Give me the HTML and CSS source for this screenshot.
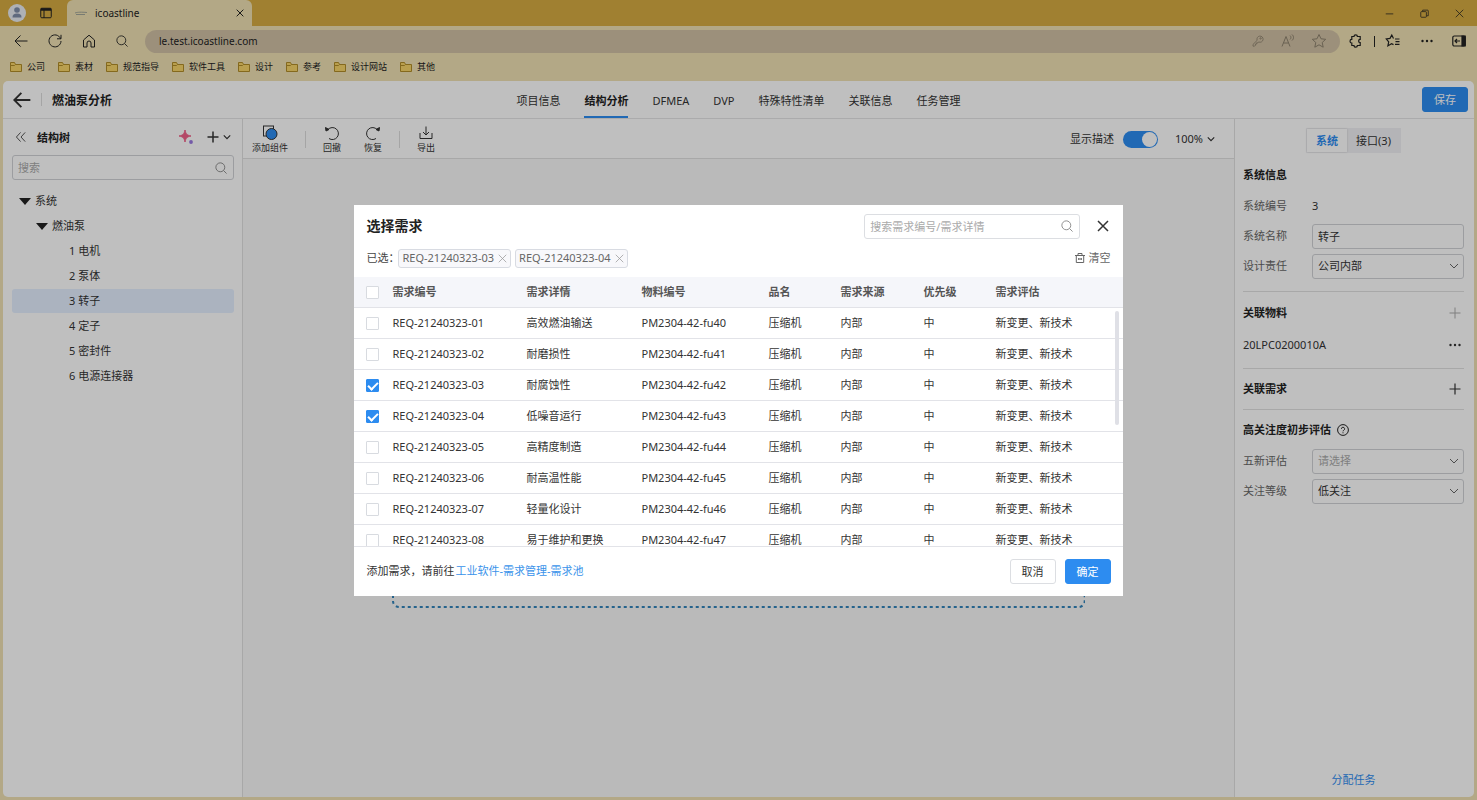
FILE: index.html
```
<!DOCTYPE html>
<html lang="zh-CN">

<head>
    <meta charset="UTF-8">
    <meta name="viewport" content="width=device-width, initial-scale=1.0">
    <title>icoastline</title>
    <link rel="stylesheet" href="styles.css">
</head>

<body>
    <!-- Icons -->
    <svg class="sprite" aria-hidden="true">
        <symbol id="i-folder" viewBox="0 0 12 12"><path d="M.5 10.500v-9h4l1 2h6v7z" fill="#f7d468" stroke="#b08d28"/><path d="M.5 4.500h4l1-1" fill="none" stroke="#b08d28"/></symbol>
        <symbol id="i-search" viewBox="0 0 14 14"><circle cx="6.200" cy="6.200" r="5.200"/><path d="M10 10l3.500 3.500"/></symbol>
        <symbol id="i-close" viewBox="0 0 12 12"><path d="M1 1l10 10M11 1L1 11"/></symbol>
        <symbol id="i-plus" viewBox="0 0 12 12"><path d="M6 .5v11M.5 6h11"/></symbol>
        <symbol id="i-down" viewBox="0 0 10 10"><path d="M1 3l4 4 4-4"/></symbol>
        <symbol id="i-back" viewBox="0 0 14 14"><path d="M13.500 7H1M6.500 1.500L1 7l5.500 5.500"/></symbol>
        <symbol id="i-dots" viewBox="0 0 12 12"><g fill="currentColor" stroke="none"><circle cx="1.500" cy="6" r="1.200"/><circle cx="6" cy="6" r="1.200"/><circle cx="10.500" cy="6" r="1.200"/></g></symbol>
        <symbol id="i-undo" viewBox="0 0 16 16"><path d="M2.500 4.500h1.500A6 6 0 1 1 5 13.500"/><path d="M1.500 2.500l.5 3.500 3-1.500z" fill="currentColor"/></symbol>
    </svg>

    <!-- Browser -->
    <div class="titlebar">
        <svg class="avatar" viewBox="0 0 18 18"><circle cx="9" cy="9" r="9" fill="#e9ecf2"/><circle cx="9" cy="6" r="2.800" fill="#7f8ea8"/><path d="M4.500 13.500c0-3 1.500-4 4.500-4s4.500 1 4.500 4z" fill="#7f8ea8"/></svg>
        <svg class="icon icon-12 workspace" viewBox="0 0 12 12"><rect x=".75" y="1.250" width="10.500" height="9.500" rx="1"/><path d="M.75 2.500h10.500" stroke-width="2.500"/><path d="M4 3v8"/></svg>
        <div class="tab">
            <svg class="icon icon-12 favicon" viewBox="0 0 12 12"><path d="M0 6c3-1 6-1 12-.500M1 7.500h9" stroke-width=".8"/></svg>
            <span class="tab-title">icoastline</span>
            <button class="plain" aria-label="关闭标签页"><svg class="icon icon-8 bold"><use href="#i-close"/></svg></button>
        </div>
        <div class="window-buttons">
            <button class="plain" aria-label="最小化"><svg class="icon icon-9" viewBox="0 0 12 12"><path d="M1 6.500h10"/></svg></button>
            <button class="plain" aria-label="还原"><svg class="icon icon-9" viewBox="0 0 12 12"><rect x="1" y="3.500" width="7.500" height="7.500" rx="1"/><path d="M3.500 3V1.500H10a1 1 0 0 1 1 1V9H9"/></svg></button>
            <button class="plain" aria-label="关闭"><svg class="icon icon-9"><use href="#i-close"/></svg></button>
        </div>
    </div>

    <div class="navbar">
        <div class="nav-left">
            <button class="plain" aria-label="后退"><svg class="icon icon-14"><use href="#i-back"/></svg></button>
            <button class="plain" aria-label="刷新"><svg class="icon icon-14" viewBox="0 0 14 14"><path d="M12.500 4.500A6 6 0 1 0 13 7M13 .8v4H9"/></svg></button>
            <button class="plain" aria-label="主页"><svg class="icon icon-14" viewBox="0 0 14 14"><path d="M1.500 6L7 1.200 12.500 6v7H9V9a2 2 0 0 0-4 0v4H1.500z"/></svg></button>
            <button class="plain" aria-label="查找"><svg class="icon icon-12"><use href="#i-search"/></svg></button>
        </div>
        <div class="address">
            <input class="url" type="text" aria-label="地址" value="le.test.icoastline.com">
            <svg class="icon icon-12" viewBox="0 0 14 14"><path d="M6 6.200a3.600 3.600 0 1 1 2 2L6.800 9H5.500v1.500H4V12l-1 1H1.200v-2z"/><circle cx="10" cy="4" r=".8"/></svg>
            <svg class="icon icon-14" viewBox="0 0 14 14"><path d="M1 12.500L5 2.500l4 10M2.500 9h5M9 1.500c1.200 1 1.200 3 0 4M11 .5c2 1.800 2 4.200 0 6"/></svg>
            <svg class="icon icon-14" viewBox="0 0 14 14"><path d="M7 .5l2 4.300 4.700.5-3.500 3.200 1 4.700L7 10.800l-4.200 2.400 1-4.700L.3 5.300 5 4.800z"/></svg>
        </div>
        <button class="plain" aria-label="扩展"><svg class="icon icon-14 medium" viewBox="0 0 14 14"><path d="M2.800 2.500H5a1.700 1.700 0 0 1 3.400 0h2.800V5.300a1.300 1.300 0 0 0 0 3.200V11.500H8.400a1.700 1.700 0 0 1-3.400 0H2.800V9a1.700 1.700 0 0 1 0-3.600z"/></svg></button>
        <span class="nav-divider"></span>
        <button class="plain" aria-label="收藏夹"><svg class="icon icon-14 medium" viewBox="0 0 14 14"><path d="M9 5h4.500M9.500 7.700h4M9 10.400h4.500M7.500 10.600L5.500 9.700l-3.600 2.200.8-4.100L.3 4.900l3.700-.5L5.800 1l1.700 3.400"/></svg></button>
        <button class="plain nav-more" aria-label="更多"><svg class="icon icon-12"><use href="#i-dots"/></svg></button>
        <button class="plain" aria-label="侧栏"><svg class="icon icon-14 medium" viewBox="0 0 14 14"><rect x=".8" y="2" width="12.400" height="10" rx="1.500"/><path d="M10 2h3.200v10H10z" fill="currentColor"/><path d="M8 7H3M5 5L3 7l2 2"/></svg></button>
    </div>

    <div class="bookmarks">
        <a href="#"><svg><use href="#i-folder"/></svg>公司</a>
        <a href="#"><svg><use href="#i-folder"/></svg>素材</a>
        <a href="#"><svg><use href="#i-folder"/></svg>规范指导</a>
        <a href="#"><svg><use href="#i-folder"/></svg>软件工具</a>
        <a href="#"><svg><use href="#i-folder"/></svg>设计</a>
        <a href="#"><svg><use href="#i-folder"/></svg>参考</a>
        <a href="#"><svg><use href="#i-folder"/></svg>设计网站</a>
        <a href="#"><svg><use href="#i-folder"/></svg>其他</a>
    </div>

    <!-- App -->
    <div class="app">
        <header class="app-header">
            <div class="app-title">
                <button class="plain" aria-label="返回"><svg class="icon icon-18 bold" viewBox="0 0 14 14"><use href="#i-back"/></svg></button>
                <span class="title-divider"></span>
                <h1>燃油泵分析</h1>
            </div>
            <nav class="tabs">
                <a href="#">项目信息</a>
                <a href="#" class="active">结构分析</a>
                <a href="#">DFMEA</a>
                <a href="#">DVP</a>
                <a href="#">特殊特性清单</a>
                <a href="#">关联信息</a>
                <a href="#">任务管理</a>
            </nav>
            <button class="btn btn-primary save">保存</button>
        </header>

        <div class="workspace-body">
            <aside class="sidebar">
                <div class="sidebar-head">
                    <button class="plain" aria-label="收起"><svg class="icon icon-10" viewBox="0 0 12 12"><path d="M5.500 .5L.5 6l5 5.500M11 .5L6 6l5 5.500"/></svg></button>
                    <h2>结构树</h2>
                    <svg class="icon-14 sparkle" viewBox="0 0 14 14"><path d="M6 0c.8 4 2 5.200 6 6-4 .8-5.200 2-6 6-.8-4-2-5.200-6-6 4-.8 5.200-2 6-6z" fill="#f06088" stroke="#f06088"/><circle cx="12" cy="12" r="1.900" fill="#9a78e0"/></svg>
                    <button class="plain add" aria-label="添加"><svg class="icon icon-12 bold"><use href="#i-plus"/></svg><svg class="icon icon-8 bold"><use href="#i-down"/></svg></button>
                </div>
                <div class="search">
                    <input type="text" placeholder="搜索" aria-label="搜索">
                    <svg class="icon icon-12"><use href="#i-search" /></svg>
                </div>
                <ul class="tree">
                    <li class="level-1"><span class="arrow"></span>系统</li>
                    <li class="level-2"><span class="arrow"></span>燃油泵</li>
                    <li class="level-3">1 电机</li>
                    <li class="level-3">2 泵体</li>
                    <li class="level-3 selected">3 转子</li>
                    <li class="level-3">4 定子</li>
                    <li class="level-3">5 密封件</li>
                    <li class="level-3">6 电源连接器</li>
                </ul>
            </aside>

            <main class="editor">
                <div class="toolbar">
                    <button class="tool"><svg class="icon icon-16" viewBox="0 0 16 16"><rect x="1.500" y="1" width="10" height="10"/><circle cx="9.500" cy="9" r="5.500" fill="#2d8cf0"/></svg>添加组件</button>
                    <span class="tool-divider"></span>
                    <div class="tool-group">
                        <button class="tool"><svg class="icon icon-16"><use href="#i-undo"/></svg>回撤</button>
                        <button class="tool"><svg class="icon icon-16 flip"><use href="#i-undo"/></svg>恢复</button>
                    </div>
                    <span class="tool-divider"></span>
                    <button class="tool"><svg class="icon icon-16" viewBox="0 0 16 16"><path d="M2 8v5.500h12V8M8 1.500v8.500M5 7l3 3 3-3"/></svg>导出</button>
                    <label class="switch-label">显示描述<input class="switch" type="checkbox" checked></label>
                    <button class="plain zoom">100%<svg class="icon icon-8 bold"><use href="#i-down"/></svg></button>
                </div>
                <div class="canvas">
                    <svg class="drop-area"><rect x="1" y="1" rx="6"/></svg>
                </div>
            </main>

            <aside class="panel">
                <div class="segmented">
                    <button class="active">系统</button>
                    <button>接口(3)</button>
                </div>
                <section>
                    <h3>系统信息</h3>
                    <div class="field"><span>系统编号</span><b>3</b></div>
                    <div class="field"><label for="name">系统名称</label><input id="name" type="text" value="转子"></div>
                    <div class="field"><label for="duty">设计责任</label><div class="select"><select id="duty"><option>公司内部</option></select><svg class="icon icon-10"><use href="#i-down"/></svg></div></div>
                </section>
                <section class="materials">
                    <div class="section-head"><h3>关联物料</h3><button class="plain muted" aria-label="添加物料"><svg class="icon icon-12"><use href="#i-plus"/></svg></button></div>
                    <div class="section-head"><span>20LPC0200010A</span><button class="plain" aria-label="更多操作"><svg class="icon icon-12"><use href="#i-dots"/></svg></button></div>
                </section>
                <section>
                    <div class="section-head"><h3>关联需求</h3><button class="plain" aria-label="添加需求"><svg class="icon icon-12 medium"><use href="#i-plus"/></svg></button></div>
                </section>
                <section class="rating">
                    <h3>高关注度初步评估<svg class="icon icon-12" viewBox="0 0 12 12"><circle cx="6" cy="6" r="5.400"/><path d="M4.400 4.800a1.600 1.600 0 1 1 2.300 1.500c-.5.2-.7.5-.7 1M6 8.300v1"/></svg></h3>
                    <div class="field"><label for="five">五新评估</label><div class="select empty"><select id="five"><option>请选择</option></select><svg class="icon icon-10"><use href="#i-down"/></svg></div></div>
                    <div class="field"><label for="level">关注等级</label><div class="select"><select id="level"><option>低关注</option></select><svg class="icon icon-10"><use href="#i-down"/></svg></div></div>
                </section>
                <a class="assign" href="#">分配任务</a>
            </aside>
        </div>
    </div>

    <!-- Dialog -->
    <div class="backdrop">
        <div class="dialog" role="dialog" aria-labelledby="dialog-title">
            <div class="dialog-head">
                <h2 id="dialog-title">选择需求</h2>
                <div class="search">
                    <input type="text" placeholder="搜索需求编号/需求详情" aria-label="搜索需求">
                    <svg class="icon icon-12"><use href="#i-search"/></svg>
                </div>
                <button class="plain" aria-label="关闭对话框"><svg class="icon icon-12 bold"><use href="#i-close"/></svg></button>
            </div>
            <div class="picked">
                <span>已选：</span>
                <span class="chip">REQ-21240323-03<button class="plain" aria-label="移除"><svg class="icon icon-9"><use href="#i-close"/></svg></button></span>
                <span class="chip">REQ-21240323-04<button class="plain" aria-label="移除"><svg class="icon icon-9"><use href="#i-close"/></svg></button></span>
                <button class="plain clear"><svg class="icon icon-10" viewBox="0 0 10 10"><path d="M0 2.500h10M3 2.500v-2h4v2M1.300 2.500v7h7.400v-7M3.700 5v2M6.300 5v2M3.700 6h2.600"/></svg>清空</button>
            </div>
            <div class="table-wrap">
                <table>
                    <colgroup><col class="c-check"><col class="c-no"><col class="c-detail"><col class="c-part"><col class="c-name"><col class="c-source"><col class="c-name"><col></colgroup>
                    <thead>
                        <tr><th><input type="checkbox" aria-label="全选"></th><th>需求编号</th><th>需求详情</th><th>物料编号</th><th>品名</th><th>需求来源</th><th>优先级</th><th>需求评估</th></tr>
                    </thead>
                    <tbody>
                        <tr><td><input type="checkbox" aria-label="选择 01"></td><td>REQ-21240323-01</td><td>高效燃油输送</td><td>PM2304-42-fu40</td><td>压缩机</td><td>内部</td><td>中</td><td>新变更、新技术</td></tr>
                        <tr><td><input type="checkbox" aria-label="选择 02"></td><td>REQ-21240323-02</td><td>耐磨损性</td><td>PM2304-42-fu41</td><td>压缩机</td><td>内部</td><td>中</td><td>新变更、新技术</td></tr>
                        <tr><td><input type="checkbox" aria-label="选择 03" checked></td><td>REQ-21240323-03</td><td>耐腐蚀性</td><td>PM2304-42-fu42</td><td>压缩机</td><td>内部</td><td>中</td><td>新变更、新技术</td></tr>
                        <tr><td><input type="checkbox" aria-label="选择 04" checked></td><td>REQ-21240323-04</td><td>低噪音运行</td><td>PM2304-42-fu43</td><td>压缩机</td><td>内部</td><td>中</td><td>新变更、新技术</td></tr>
                        <tr><td><input type="checkbox" aria-label="选择 05"></td><td>REQ-21240323-05</td><td>高精度制造</td><td>PM2304-42-fu44</td><td>压缩机</td><td>内部</td><td>中</td><td>新变更、新技术</td></tr>
                        <tr><td><input type="checkbox" aria-label="选择 06"></td><td>REQ-21240323-06</td><td>耐高温性能</td><td>PM2304-42-fu45</td><td>压缩机</td><td>内部</td><td>中</td><td>新变更、新技术</td></tr>
                        <tr><td><input type="checkbox" aria-label="选择 07"></td><td>REQ-21240323-07</td><td>轻量化设计</td><td>PM2304-42-fu46</td><td>压缩机</td><td>内部</td><td>中</td><td>新变更、新技术</td></tr>
                        <tr><td><input type="checkbox" aria-label="选择 08"></td><td>REQ-21240323-08</td><td>易于维护和更换</td><td>PM2304-42-fu47</td><td>压缩机</td><td>内部</td><td>中</td><td>新变更、新技术</td></tr>
                    </tbody>
                </table>
                <span class="scroll-thumb"></span>
            </div>
            <div class="dialog-foot">
                <p>添加需求，请前往<a href="#">工业软件-需求管理-需求池</a></p>
                <button class="btn">取消</button>
                <button class="btn btn-primary">确定</button>
            </div>
        </div>
    </div>
</body>

</html>
```
FILE: styles.css
```
* {
    box-sizing: border-box;
}

body {
    display: flex;
    flex-direction: column;
    height: 100vh;
    margin: 0;
    background-color: #efe1b3;
    font-family: "Noto Sans", "Noto Sans CJK SC", sans-serif;
    font-size: 11px;
    line-height: 16px;
    color: #333;
    overflow: hidden;
}

h1, h2, h3, p, ul {
    margin: 0;
    padding: 0;
}

h2, h3 {
    font-size: 11px;
    color: #222;
}

a {
    color: inherit;
    text-decoration: none;
}

button, input, select {
    font: inherit;
    color: inherit;
}

.sprite {
    position: absolute;
    width: 0;
    height: 0;
}

.plain {
    display: flex;
    align-items: center;
    padding: 0;
    border: 0;
    background: none;
}

/* Icons */
.icon {
    flex: none;
    display: block;
    fill: none;
    stroke: currentColor;
    stroke-width: 1;
    overflow: visible;
}

.medium { stroke-width: 1.2; }
.bold { stroke-width: 1.5; }
.icon-8 { width: 8px; height: 8px; }
.icon-9 { width: 9px; height: 9px; }
.icon-10 { width: 10px; height: 10px; }
.icon-12 { width: 12px; height: 12px; }
.icon-14 { width: 14px; height: 14px; }
.icon-16 { width: 16px; height: 16px; }
.icon-18 { width: 18px; height: 18px; }
.flip { transform: scaleX(-1); }

/* Browser */
.titlebar {
    flex: none;
    display: flex;
    align-items: center;
    height: 26px;
    padding-left: 8px;
    background-color: #d6ab42;
    color: #222;
}

.avatar {
    width: 18px;
    height: 18px;
}

.workspace {
    margin: 0 15px 0 14px;
}

.tab {
    display: flex;
    align-items: center;
    align-self: stretch;
    gap: 8px;
    width: 185px;
    padding: 0 8px;
    border-radius: 6px 6px 0 0;
    background-color: #efe1b3;
    font-size: 10px;
}

.tab-title {
    flex: 1;
}

.favicon {
    color: #8d9490;
}

.window-buttons {
    display: flex;
    gap: 26px;
    margin-left: auto;
    padding-right: 13px;
}

.navbar {
    flex: none;
    display: flex;
    align-items: center;
    height: 30px;
    padding: 0 11px 0 14px;
    color: #222;
}

.nav-left {
    display: flex;
    gap: 20px;
}

.address {
    flex: 1;
    display: flex;
    align-items: center;
    gap: 17px;
    height: 23px;
    margin: 0 9px 0 17px;
    padding: 0 14px;
    border-radius: 12px;
    background-color: #d1c1a5;
    color: #8d826e;
}

.url {
    flex: 1;
    padding: 0;
    border: 0;
    background: none;
    font-size: 10px;
    color: #222;
}

.nav-divider {
    width: 1px;
    height: 11px;
    margin: 0 11px;
    background-color: #222;
}

.nav-more {
    margin: 0 19px 0 21px;
}

.bookmarks {
    flex: none;
    display: flex;
    gap: 13px;
    height: 25px;
    padding: 0 10px 3px;
    font-size: 9px;
    line-height: 22px;
    color: #222;
}

.bookmarks a {
    display: flex;
    align-items: center;
    gap: 5px;
}

.bookmarks svg {
    width: 12px;
    height: 12px;
}

/* App */
.app {
    flex: 1;
    display: flex;
    flex-direction: column;
    min-height: 0;
    margin: 0 3px 3px;
    border-radius: 5px;
    background-color: #fff;
    overflow: hidden;
}

.app-header {
    display: grid;
    grid-template-columns: 1fr auto 1fr;
    align-items: center;
    height: 38px;
    padding: 0 6px;
    border-bottom: 1px solid #e4e4e6;
}

.app-title {
    display: flex;
    align-items: center;
    gap: 10px;
    padding-left: 4px;
}

.title-divider {
    width: 1px;
    height: 13px;
    background-color: #dcdcdc;
}

h1 {
    font-size: 12px;
    line-height: 18px;
    padding-top: 2px;
    color: #222;
}

.tabs {
    display: flex;
    gap: 24px;
    height: 37px;
    line-height: 40px;
}

.tabs .active {
    border-bottom: 2px solid #2d8cf0;
    font-weight: bold;
    color: #222;
}

.btn {
    height: 25px;
    width: 46px;
    padding: 1px 0 0;
    border: 1px solid #dcdee2;
    border-radius: 3px;
    background-color: #fff;
}

.btn-primary {
    border-color: #2d8cf0;
    background-color: #2d8cf0;
    color: #fff;
}

.save {
    justify-self: end;
}

.workspace-body {
    flex: 1;
    display: flex;
    min-height: 0;
}

/* Structure tree */
.sidebar {
    flex: none;
    width: 240px;
    padding: 6px 8px 6px 9px;
    border-right: 1px solid #e0e0e0;
}

.sidebar-head {
    display: flex;
    align-items: center;
    height: 24px;
    margin-bottom: 6px;
    padding: 0 3px 0 4px;
}

.sidebar-head h2 {
    flex: 1;
    margin-left: 11px;
    padding-top: 1px;
}

.add {
    gap: 4px;
    margin-left: 14px;
}

.search {
    display: flex;
    align-items: center;
    height: 25px;
    padding: 0 6px 0 5px;
    border: 1px solid #d0d2d6;
    border-radius: 3px;
    color: #808080;
}

.search input {
    flex: 1;
    min-width: 0;
    padding: 1px 0 0;
    border: 0;
    background: none;
}

.search input::placeholder {
    color: #aaa;
}

.tree {
    display: flex;
    flex-direction: column;
    gap: 1px;
    margin-top: 9px;
    list-style: none;
}

.tree li {
    display: flex;
    align-items: center;
    gap: 4px;
    height: 24px;
    border-radius: 3px;
}

.tree .level-1 { padding-left: 7px; }
.tree .level-2 { padding-left: 24px; }
.tree .level-3 { padding-left: 57px; }

.tree .selected {
    background-color: #e4efff;
}

.arrow {
    border: 6px solid transparent;
    border-top: 7px solid #222;
    border-bottom: 0;
}

/* Editor */
.editor {
    flex: 1;
    display: flex;
    flex-direction: column;
    min-width: 0;
}

.toolbar {
    display: flex;
    align-items: center;
    gap: 17px;
    height: 40px;
    padding: 1px 19px 0 9px;
    border-bottom: 1px solid #e0e0e0;
}

.tool {
    display: flex;
    flex-direction: column;
    align-items: center;
    gap: 1px;
    padding: 0;
    border: 0;
    background: none;
    font-size: 9px;
    line-height: 12px;
}

.tool-group {
    display: flex;
    gap: 23px;
}

.tool-divider {
    width: 1px;
    height: 17px;
    background-color: #dcdcdc;
}

.switch-label {
    display: flex;
    align-items: center;
    gap: 9px;
    margin-left: auto;
}

.switch {
    appearance: none;
    width: 35px;
    height: 17px;
    margin: 0;
    padding: 1px;
    border-radius: 9px;
    background-color: #2d8cf0;
}

.switch::after {
    content: "";
    display: block;
    width: 15px;
    height: 15px;
    margin-left: auto;
    border-radius: 50%;
    background-color: #fff;
}

.zoom {
    gap: 4px;
}

.canvas {
    flex: 1;
    background-color: #f8f8f8;
}

.drop-area {
    display: block;
    width: 70%;
    height: 370px;
    margin: 79px auto 0;
    fill: none;
    stroke: #3284bb;
    stroke-width: 2;
    stroke-dasharray: 3 3;
}

.drop-area rect {
    width: calc(100% - 2px);
    height: calc(100% - 2px);
}

/* Properties */
.panel {
    flex: none;
    display: flex;
    flex-direction: column;
    width: 240px;
    padding: 9px 10px 9px 8px;
    border-left: 1px solid #e0e0e0;
}

.segmented {
    display: flex;
    align-self: center;
    margin-bottom: 6px;
    padding: 1px;
    background-color: #f1f1f4;
}

.segmented button {
    height: 23px;
    padding: 0 9px;
    border: 0;
    background: none;
}

.segmented .active {
    background-color: #fff;
    box-shadow: 0 0 2px #ccc;
    font-weight: bold;
    color: #2d8cf0;
}

.panel section + section {
    border-top: 1px solid #e0e0e0;
}

.panel h3 {
    display: flex;
    align-items: center;
    gap: 6px;
    height: 32px;
}

.field {
    display: grid;
    grid-template-columns: 69px 1fr;
    align-items: center;
    height: 30px;
    color: #666;
}

.panel section:first-of-type {
    padding-bottom: 10px;
}

.field b {
    font-weight: normal;
    color: #333;
}

.field input, .field select {
    width: 100%;
    height: 25px;
    padding: 0 5px;
    border: 1px solid #d0d2d6;
    border-radius: 3px;
    background-color: #fff;
    color: #333;
}

.select {
    position: relative;
}

.select select {
    appearance: none;
}

.select.empty select {
    color: #aaa;
}

.select svg {
    position: absolute;
    top: 7px;
    right: 5px;
}

.section-head {
    display: flex;
    align-items: center;
    justify-content: space-between;
    padding: 4px 3px 4px 0;
}

.materials .section-head {
    height: 36px;
    padding: 6px 3px 0 0;
}

.materials .section-head + .section-head {
    height: 40px;
    padding-bottom: 12px;
}

.muted {
    color: #aaa;
}

.rating h3 {
    height: 36px;
    padding-top: 4px;
}

.assign {
    margin-top: auto;
    text-align: center;
    color: #2d8cf0;
}

/* Dialog */
.backdrop {
    position: fixed;
    inset: 0;
    display: flex;
    align-items: center;
    justify-content: center;
    background-color: rgba(0, 0, 0, 0.25);
}

.dialog {
    width: 52%;
    background-color: #fff;
}

.dialog-head {
    display: flex;
    align-items: center;
    padding: 9px 14px 0 12px;
}

.dialog-head h2 {
    flex: 1;
    font-size: 14px;
}

.dialog-head .search {
    width: 29%;
    margin-right: 17px;
    border-color: #dcdee2;
}

.picked {
    display: flex;
    align-items: center;
    gap: 4px;
    padding: 10px 12px 9px;
    color: #444;
}

.picked > span:first-child {
    width: 28px;
    white-space: nowrap;
}

.chip {
    display: flex;
    align-items: center;
    gap: 4px;
    height: 19px;
    padding: 0 3px;
    border: 1px solid #d8dbe2;
    border-radius: 3px;
    background-color: #f8f8fb;
    color: #666;
}

.chip button {
    color: #999;
}

.clear {
    gap: 4px;
    margin-left: auto;
    color: #666;
}

.table-wrap {
    position: relative;
    height: 270px;
    border-bottom: 1px solid #e2e3e8;
    overflow: hidden;
}

table {
    width: 100%;
    table-layout: fixed;
    border-collapse: collapse;
}

.c-check { width: 38px; }
.c-no { width: 134px; }
.c-detail { width: 115px; }
.c-part { width: 127px; }
.c-name { width: 72px; }
.c-source { width: 83px; }

th, td {
    height: 31px;
    padding: 0;
    border-bottom: 1px solid #e2e3e8;
    text-align: left;
}

th {
    padding-top: 1px;
    background-color: #f5f6fa;
    color: #555;
}

table input {
    appearance: none;
    display: block;
    width: 13px;
    height: 13px;
    margin: 0 0 0 12px;
    border: 1px solid #d8dbe0;
    border-radius: 1px;
    background-color: #fff;
}

table input:checked {
    border-color: #2d8cf0;
    background-color: #2d8cf0;
}

table input:checked::after {
    content: "";
    display: block;
    width: 8px;
    height: 4px;
    margin: 2px auto 0;
    border: solid #fff;
    border-width: 0 0 2px 2px;
    transform: rotate(-45deg);
}

.scroll-thumb {
    position: absolute;
    top: 34px;
    right: 4px;
    width: 4px;
    height: 114px;
    border-radius: 2px;
    background-color: #dfe0e6;
}

.dialog-foot {
    display: flex;
    align-items: center;
    gap: 9px;
    padding: 12px;
}

.dialog-foot p {
    flex: 1;
}

.dialog-foot a {
    margin-left: 1px;
    color: #3a93ea;
}
```
